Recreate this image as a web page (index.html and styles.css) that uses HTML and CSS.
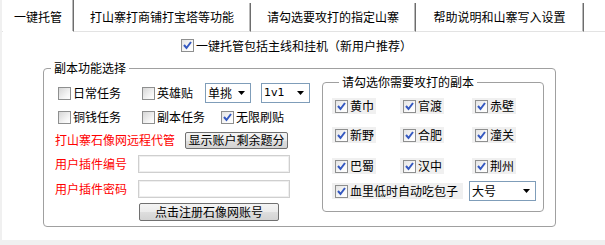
FILE: index.html
```html
<!DOCTYPE html>
<html lang="zh-CN">
<head>
<meta charset="utf-8">
<title>一键托管</title>
<link rel="stylesheet" href="styles.css">
</head>
<body>
<div class="win">
  <div class="tabs">
    <div class="tab-gap"></div>
    <div class="tab sel t1">一键托管</div>
    <div class="tab t2">打山寨打商铺打宝塔等功能</div>
    <div class="tab t3">请勾选要攻打的指定山寨</div>
    <div class="tab t4">帮助说明和山寨写入设置</div>
    <div class="tab-fill"></div>
  </div>
  <div class="page">
    <label class="mainopt"><span class="cb on"><svg width="11" height="11" viewBox="0 0 11 11"><polyline points="2,5 4.5,8 9,2" fill="none" stroke="#3458c0" stroke-width="2"/></svg></span>一键托管包括主线和挂机（新用户推荐）</label>
    <fieldset class="grp outer">
      <legend>副本功能选择</legend>
      <div class="cols">
        <div class="left">
          <div class="row r1">
            <label class="opt w84"><span class="cb"></span>日常任务</label>
            <label class="opt w63"><span class="cb"></span>英雄贴</label>
            <div class="combo c1"><span>单挑</span><svg width="7" height="4" viewBox="0 0 7 4"><polygon points="0,0 7,0 3.5,4" fill="#000"/></svg></div>
            <div class="combo c2"><span class="num">1v1</span><svg width="7" height="4" viewBox="0 0 7 4"><polygon points="0,0 7,0 3.5,4" fill="#000"/></svg></div>
          </div>
          <div class="row r2">
            <label class="opt w84"><span class="cb"></span>铜钱任务</label>
            <label class="opt w79"><span class="cb"></span>副本任务</label>
            <label class="opt"><span class="cb on"><svg width="11" height="11" viewBox="0 0 11 11"><polyline points="2,5 4.5,8 9,2" fill="none" stroke="#3458c0" stroke-width="2"/></svg></span>无限刷贴</label>
          </div>
          <div class="row r3">
            <span class="red">打山寨石像网远程代管</span>
            <button class="btn b1">显示账户剩余题分</button>
          </div>
          <div class="row r4">
            <span class="red lbl">用户插件编号</span>
            <input class="inp" type="text">
          </div>
          <div class="row r5">
            <span class="red lbl">用户插件密码</span>
            <input class="inp" type="password">
          </div>
          <div class="row r6">
            <button class="btn b2">点击注册石像网账号</button>
          </div>
        </div>
        <fieldset class="grp inner">
          <legend>请勾选你需要攻打的副本</legend>
          <div class="irow i1">
            <span class="slot s1"><label class="chk"><span class="cb on"><svg width="11" height="11" viewBox="0 0 11 11"><polyline points="2,5 4.5,8 9,2" fill="none" stroke="#3458c0" stroke-width="2"/></svg></span>黄巾</label></span>
            <span class="slot s2"><label class="chk"><span class="cb on"><svg width="11" height="11" viewBox="0 0 11 11"><polyline points="2,5 4.5,8 9,2" fill="none" stroke="#3458c0" stroke-width="2"/></svg></span>官渡</label></span>
            <span class="slot"><label class="chk"><span class="cb on"><svg width="11" height="11" viewBox="0 0 11 11"><polyline points="2,5 4.5,8 9,2" fill="none" stroke="#3458c0" stroke-width="2"/></svg></span>赤壁</label></span>
          </div>
          <div class="irow i2">
            <span class="slot s1"><label class="chk"><span class="cb on"><svg width="11" height="11" viewBox="0 0 11 11"><polyline points="2,5 4.5,8 9,2" fill="none" stroke="#3458c0" stroke-width="2"/></svg></span>新野</label></span>
            <span class="slot s2"><label class="chk"><span class="cb on"><svg width="11" height="11" viewBox="0 0 11 11"><polyline points="2,5 4.5,8 9,2" fill="none" stroke="#3458c0" stroke-width="2"/></svg></span>合肥</label></span>
            <span class="slot"><label class="chk"><span class="cb on"><svg width="11" height="11" viewBox="0 0 11 11"><polyline points="2,5 4.5,8 9,2" fill="none" stroke="#3458c0" stroke-width="2"/></svg></span>潼关</label></span>
          </div>
          <div class="irow i3">
            <span class="slot s1"><label class="chk"><span class="cb on"><svg width="11" height="11" viewBox="0 0 11 11"><polyline points="2,5 4.5,8 9,2" fill="none" stroke="#3458c0" stroke-width="2"/></svg></span>巴蜀</label></span>
            <span class="slot s2"><label class="chk"><span class="cb on"><svg width="11" height="11" viewBox="0 0 11 11"><polyline points="2,5 4.5,8 9,2" fill="none" stroke="#3458c0" stroke-width="2"/></svg></span>汉中</label></span>
            <span class="slot"><label class="chk"><span class="cb on"><svg width="11" height="11" viewBox="0 0 11 11"><polyline points="2,5 4.5,8 9,2" fill="none" stroke="#3458c0" stroke-width="2"/></svg></span>荆州</label></span>
          </div>
          <div class="irow i4">
            <label class="chk long"><span class="cb on"><svg width="11" height="11" viewBox="0 0 11 11"><polyline points="2,5 4.5,8 9,2" fill="none" stroke="#3458c0" stroke-width="2"/></svg></span>血里低时自动吃包子</label>
            <div class="combo c3"><span>大号</span><svg width="7" height="4" viewBox="0 0 7 4"><polygon points="0,0 7,0 3.5,4" fill="#000"/></svg></div>
          </div>
        </fieldset>
      </div>
    </fieldset>
  </div>
  <div class="foot"></div>
</div>
</body>
</html>
```

FILE: styles.css
```css
* { box-sizing: border-box; }
html, body { margin: 0; padding: 0; }
body {
  width: 605px;
  height: 245px;
  overflow: hidden;
  background: #fff;
  color: #000;
  font: 12px/14px "Noto Sans CJK SC", "Noto Sans", sans-serif;
}
.win {
  display: flex;
  flex-direction: column;
  height: 245px;
  border-left: 2px solid #f0f0f0;
}

/* tabs */
.tabs { display: flex; height: 32px; flex: none; }
.tab-gap { width: 1px; border-bottom: 1px solid #e3e3e3; }
.tab-fill { flex: 1; border-bottom: 1px solid #e3e3e3; }
.tab {
  margin-top: 3px;
  height: 29px;
  padding-top: 7px;
  text-align: center;
  white-space: nowrap;
  border-bottom: 1px solid #e3e3e3;
  border-right: 1px solid #6d6d6d;
  box-shadow: inset -1px 0 0 #b9b9b9;
}
.tab.sel {
  margin-top: 0;
  height: 32px;
  padding-top: 10px;
  border-bottom-color: #fff;
}
.t1 { width: 71px; }
.t2 { width: 177px; }
.t3 { width: 165px; }
.t4 { width: 168px; }

.page { flex: 1; display: flex; flex-direction: column; padding-top: 7px; }
.foot { height: 5px; flex: none; background: #f0f0f0; }

.mainopt {
  display: flex;
  align-items: center;
  gap: 2px;
  height: 13px;
  padding-left: 179px;
}

/* checkbox */
.cb {
  flex: none;
  width: 13px;
  height: 13px;
  border: 1px solid #8e8f8f;
  background: linear-gradient(135deg, #d6d6d6, #f6f6f6 70%, #fff);
  display: inline-flex;
  align-items: center;
  justify-content: center;
}
.cb.on { background: linear-gradient(135deg, #e4e4e4, #fbfbfb 70%, #fff); }
.cb svg { display: block; }

/* group boxes */
.grp {
  margin: 0;
  padding: 0;
  border: 1px solid #a0a0a0;
  border-radius: 4px;
  min-width: 0;
}
.grp legend {
  margin-left: 7px;
  padding: 0 3px;
  line-height: 14px;
}
.outer { margin: 9px 0 0 41px; width: 513px; }
.cols { display: flex; align-items: flex-start; }
.left { width: 278px; flex: none; padding: 0 0 5px 11px; }
.row { display: flex; align-items: center; }
.r1 { height: 20px; margin-top: 8px; padding-left: 3px; }
.r2 { height: 20px; margin-top: 4px; padding-left: 3px; }
.r3 { height: 20px; margin-top: 3px; gap: 10px; }
.r4 { height: 18px; margin-top: 5px; }
.r5 { height: 18px; margin-top: 7px; }
.r6 { height: 18px; margin-top: 5px; padding-left: 84px; }

.opt { display: flex; align-items: center; gap: 2px; white-space: nowrap; }
.w84 { width: 84px; }
.w79 { width: 79px; }
.w63 { width: 63px; }

.combo {
  height: 20px;
  border: 1px solid #7f9db9;
  background: #fff;
  display: flex;
  align-items: center;
  justify-content: space-between;
  padding: 0 5px 0 2px;
  flex: none;
}
.combo svg { display: block; }
.c1 { width: 46px; margin-right: 10px; }
.c2 { width: 49px; }
.c3 { width: 67px; margin-left: 6px; }
.num { font-family: "DejaVu Sans", sans-serif; font-size: 11px; }

.red { color: #ff0000; white-space: nowrap; }
.lbl { width: 83px; }

.btn {
  margin: 0;
  padding: 0;
  font: inherit;
  color: #000;
  border: 1px solid #707070;
  border-radius: 2px;
  background: linear-gradient(#f4f4f4, #ebebeb 50%, #dedede 51%, #d3d3d3);
  display: flex;
  align-items: center;
  justify-content: center;
  white-space: nowrap;
}
.b1 { width: 103px; height: 17px; }
.b2 { width: 140px; height: 18px; }

.inp {
  width: 152px;
  height: 18px;
  margin: 0;
  padding: 0 2px;
  border: 1px solid #cfcfcf;
  box-shadow: inset 0 0 0 1px #efefef;
  background: #fff;
  font: inherit;
  outline: none;
}

/* inner group */
.inner { width: 222px; flex: none; padding: 0 0 10px 9px; }
.irow { display: flex; align-items: center; }
.i1 { height: 16px; margin-top: 9px; }
.i2 { height: 16px; margin-top: 13px; }
.i3 { height: 16px; margin-top: 15px; }
.i4 { height: 20px; margin-top: 7px; }
.slot { display: block; }
.s1 { width: 68px; }
.s2 { width: 72px; }
.chk {
  display: inline-flex;
  align-items: center;
  gap: 2px;
  height: 16px;
  padding: 0 2px 0 3px;
  background: #f0f0f0;
  white-space: nowrap;
}
.chk.long { padding-right: 5px; }
```
